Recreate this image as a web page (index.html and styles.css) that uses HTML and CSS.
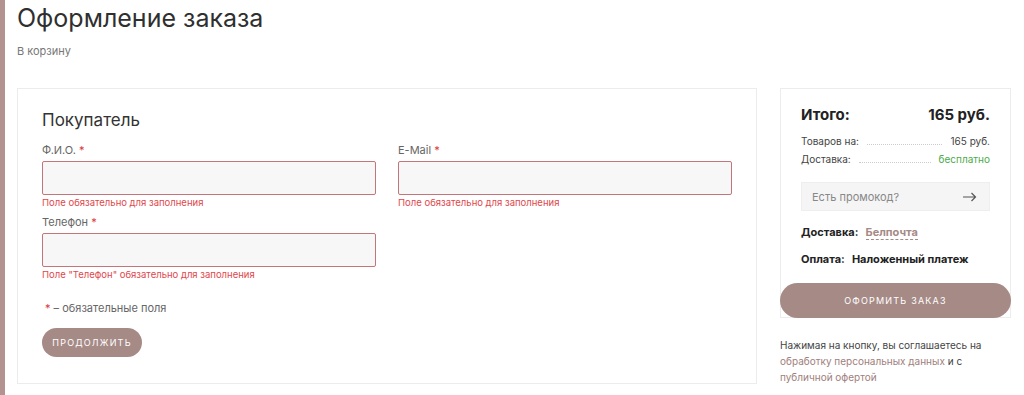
FILE: index.html
```html
<!DOCTYPE html>
<html lang="ru">
<head>
    <meta charset="UTF-8">
    <meta name="viewport" content="width=device-width, initial-scale=1.0">
    <title>Оформление заказа</title>
    <link rel="stylesheet" href="styles.css">
</head>
<body>
    <div class="page">
        <h1 class="title">Оформление заказа</h1>
        <a class="back" href="#">В корзину</a>

        <div class="layout">
            <div class="card form-card">
                <h2 class="section">Покупатель</h2>
                <div class="fields">
                    <div class="field">
                        <label>Ф.И.О. <span class="req">*</span></label>
                        <input type="text" class="input error">
                        <div class="err">Поле обязательно для заполнения</div>
                    </div>
                    <div class="field">
                        <label>E-Mail <span class="req">*</span></label>
                        <input type="text" class="input error">
                        <div class="err">Поле обязательно для заполнения</div>
                    </div>
                    <div class="field">
                        <label>Телефон <span class="req">*</span></label>
                        <input type="text" class="input error">
                        <div class="err">Поле "Телефон" обязательно для заполнения</div>
                    </div>
                </div>
                <p class="note"><span class="req">*</span> – обязательные поля</p>
                <button class="button small">Продолжить</button>
            </div>

            <div class="side">
                <div class="card total-card">
                    <div class="total">
                        <span>Итого:</span>
                        <span>165 руб.</span>
                    </div>
                    <div class="line">
                        <span>Товаров на:</span>
                        <span class="dots"></span>
                        <span>165 руб.</span>
                    </div>
                    <div class="line">
                        <span>Доставка:</span>
                        <span class="dots"></span>
                        <span class="free">бесплатно</span>
                    </div>
                    <div class="promo">
                        <input type="text" placeholder="Есть промокод?">
                        <span class="arrow">
                            <svg width="14" height="10" viewBox="0 0 14 10"><path d="M0 5h12.5M8.5 1l4 4-4 4" fill="none" stroke="#555" stroke-width="1.2"/></svg>
                        </span>
                    </div>
                    <div class="info"><b>Доставка:</b> <a href="#" class="dashed">Белпочта</a></div>
                    <div class="info"><b>Оплата:</b> <b>Наложенный платеж</b></div>
                    <button class="button wide">Оформить заказ</button>
                </div>
                <p class="agree">Нажимая на кнопку, вы соглашаетесь на <a href="#">обработку персональных данных</a> и с <a href="#">публичной офертой</a></p>
            </div>
        </div>
    </div>
</body>
</html>
```

FILE: styles.css
```css
body {
    margin: 0;
    font-family: Inter, "Open Sans", sans-serif;
    color: #333;
    background: #fff;
    border-left: 5px solid #b3938f;
    min-height: 395px;
    box-sizing: border-box;
}
.page {
    padding: 3px 0 0 12px;
}
.title {
    font-size: 25px;
    font-weight: 400;
    margin: 0;
    line-height: 30px;
    color: #2f2f2f;
}
.back {
    display: block;
    margin-top: 11px;
    font-size: 11px;
    color: #777;
    text-decoration: none;
}
.layout {
    display: flex;
    gap: 23px;
    margin-top: 30px;
    align-items: flex-start;
}
.card {
    border: 1px solid #ececec;
    background: #fff;
    box-sizing: border-box;
}
.form-card {
    width: 740px;
    height: 296px;
    padding: 20px 24px 0 24px;
}
.section {
    font-size: 17px;
    font-weight: 400;
    margin: 0 0 12px;
    line-height: 22px;
}
.fields {
    display: grid;
    grid-template-columns: 334px 334px;
    column-gap: 22px;
    row-gap: 5px;
}
.field label {
    display: block;
    font-size: 11px;
    color: #666;
    line-height: 14px;
    margin-bottom: 4px;
}
.req {
    color: #d9363e;
}
.input {
    display: block;
    width: 100%;
    height: 34px;
    box-sizing: border-box;
    background: #f7f7f7;
    border: 1px solid #ddd;
    border-radius: 2px;
}
.input.error {
    border-color: #c2767a;
}
.err {
    font-size: 9.5px;
    color: #e0474c;
    line-height: 15px;
}
.note {
    font-size: 11px;
    color: #666;
    margin: 19px 0 13px 3px;
}
.button {
    background-color: #a68a86;
    color: #fff;
    border: none;
    text-transform: uppercase;
    letter-spacing: 1.2px;
    font-family: inherit;
    font-size: 9px;
    cursor: pointer;
}
.button:hover {
    background-color: #957773;
}
.button.small {
    width: 100px;
    height: 29px;
    border-radius: 15px;
}
.side {
    width: 231px;
}
.total-card {
    padding: 16px 20px 0 20px;
    height: 230px;
}
.total {
    display: flex;
    justify-content: space-between;
    font-weight: 700;
    font-size: 15px;
    color: #222;
    margin-bottom: 8px;
}
.line {
    display: flex;
    align-items: baseline;
    font-size: 10px;
    color: #444;
    line-height: 18px;
}
.dots {
    flex: 1;
    border-bottom: 1px dotted #ccc;
    margin: 0 8px;
}
.free {
    color: #4caa4c;
}
.promo {
    display: flex;
    align-items: center;
    background: #f5f5f5;
    border: 1px solid #eee;
    height: 29px;
    margin: 14px 0 14px;
    box-sizing: border-box;
}
.promo input {
    flex: 1;
    width: 0;
    min-width: 0;
    border: none;
    background: transparent;
    font-family: inherit;
    font-size: 11px;
    padding-left: 10px;
    color: #333;
    outline: none;
}
.promo input::placeholder {
    color: #888;
}
.arrow {
    padding-right: 12px;
    display: flex;
}
.info {
    font-size: 11px;
    color: #222;
    line-height: 14px;
    margin-bottom: 13px;
}
.info b {
    margin-right: 4px;
}
.dashed {
    color: #a68a86;
    font-weight: 700;
    text-decoration: none;
    border-bottom: 1px dashed #a68a86;
}
.button.wide {
    width: 231px;
    height: 35px;
    border-radius: 18px;
    margin-left: -21px;
    margin-top: 4px;
}
.agree {
    font-size: 10px;
    color: #444;
    line-height: 16px;
    margin: 19px 0 0;
}
.agree a {
    color: #a0807c;
    text-decoration: none;
}
```
